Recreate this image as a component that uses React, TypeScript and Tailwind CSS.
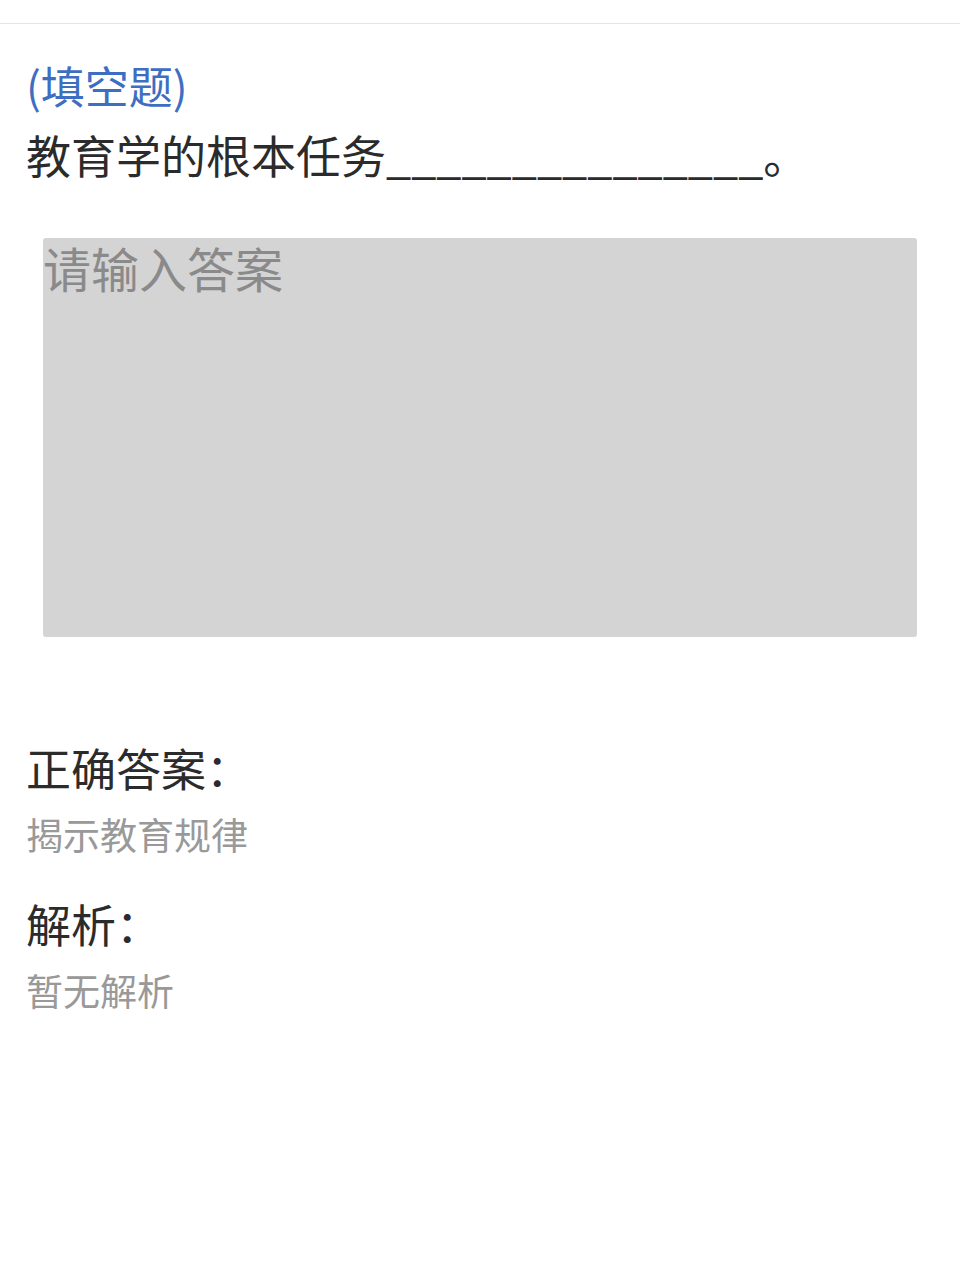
export default function App() {
  return (
    <div
      className="min-h-[1280px] w-full bg-white"
      style={{ fontFamily: '"Noto Sans CJK SC", "Noto Sans", sans-serif' }}
    >
      <div className="h-[24px] border-b border-[#e6e6e6]" />

      <div className="px-[26px] pt-[27px]">
        <div className="text-[44px] leading-[69px] text-[#3d6ec2]">(填空题)</div>
        <div className="text-[45px] leading-[69px] text-[#2b2b2b]">
          教育学的根本任务_______________。
        </div>
      </div>

      <div className="mt-[49px] px-[43px]">
        <textarea
          placeholder="请输入答案"
          className="block h-[399px] w-full resize-none rounded-[3px] bg-[#d4d4d4] p-0 text-[48px] leading-[58px] text-[#333] outline-none placeholder:text-[#8a8a8a]"
        />
      </div>

      <div className="px-[26px] pt-[98px]">
        <div className="text-[45px] leading-[66px] text-[#2b2b2b]">正确答案：</div>
        <div className="text-[37px] leading-[66px] text-[#999]">揭示教育规律</div>
        <div className="mt-[24px] text-[45px] leading-[66px] text-[#2b2b2b]">解析：</div>
        <div className="text-[37px] leading-[66px] text-[#999]">暂无解析</div>
      </div>
    </div>
  );
}
